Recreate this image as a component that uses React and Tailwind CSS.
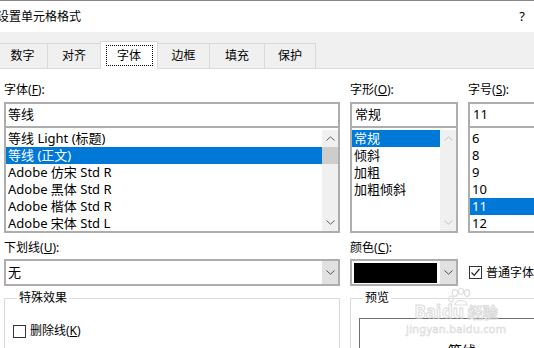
import React from "react";

const FONT = "font-['Noto_Sans','Noto_Sans_CJK_SC',sans-serif]";

function Chevron({ up = false, color = "#606060" }) {
  return (
    <svg width="9" height="5" viewBox="0 0 9 5">
      <path
        d={up ? "M0.5 4.5 L4.5 0.8 L8.5 4.5" : "M0.5 0.5 L4.5 4.2 L8.5 0.5"}
        fill="none"
        stroke={color}
        strokeWidth="1"
      />
    </svg>
  );
}

function Scrollbar({ thumb = false, disabled = false }) {
  const c = disabled ? "#c4c4c4" : "#606060";
  return (
    <div className="flex w-[16px] flex-col bg-[#f0f0f0]">
      <div className="flex h-[17px] items-center justify-center">
        <Chevron up color={c} />
      </div>
      {thumb && <div className="h-[17px] bg-[#cdcdcd]" />}
      <div className="flex-1" />
      <div className="flex h-[17px] items-center justify-center">
        <Chevron color={c} />
      </div>
    </div>
  );
}

function Item({ children, selected }) {
  return (
    <div
      className={`h-[17px] whitespace-nowrap pl-[2px] leading-[17px] ${
        selected ? "bg-[#0078d7] text-white" : ""
      }`}
    >
      {children}
    </div>
  );
}

function Label({ text, hot, rest = "):" }) {
  return (
    <div className="h-[18px] whitespace-nowrap text-[12px] leading-[18px]">
      {text}(<u>{hot}</u>
      {rest}
    </div>
  );
}

function Check({ checked, children }) {
  return (
    <div className="flex items-center gap-[4px] whitespace-nowrap text-[12px]">
      <div className="flex h-[13px] w-[13px] shrink-0 items-center justify-center border border-[#333] bg-white">
        {checked && (
          <svg width="11" height="11" viewBox="0 0 11 11">
            <path d="M1.5 5.5 L4.2 8.3 L9.5 2" fill="none" stroke="#222" strokeWidth="1.2" />
          </svg>
        )}
      </div>
      <span>{children}</span>
    </div>
  );
}

const tabs = [
  { t: "数字", w: "w-[51px]" },
  { t: "对齐", w: "w-[54px]" },
  { t: "字体", w: "w-[58px]", sel: true },
  { t: "边框", w: "w-[53px]" },
  { t: "填充", w: "w-[56px]" },
  { t: "保护", w: "w-[52px]" },
];

export default function App() {
  return (
    <div className={`relative h-[348px] w-[534px] overflow-hidden bg-white text-black ${FONT}`}>
      <div className="h-px bg-[#8a8a8a]" />
      <div className="flex h-[31px] items-center justify-between pr-[9px]">
        <span className="-ml-[3px] text-[12px]">设置单元格格式</span>
        <span className="text-[13px]">?</span>
      </div>

      {/* tab strip */}
      <div className="flex h-[37px] items-end border-b border-[#d9d9d9] bg-[#f0f0f0] pl-0">
        <div className="-ml-[3px] flex items-end">
          {tabs.map((tab, i) =>
            tab.sel ? (
              <div
                key={tab.t}
                className={`relative z-10 -mb-px -ml-px flex h-[28px] ${tab.w} items-center justify-center border border-b-0 border-[#d9d9d9] bg-white`}
              >
                <div className="flex h-[21px] w-[47px] items-center justify-center border border-dotted border-black text-[12px]">
                  {tab.t}
                </div>
              </div>
            ) : (
              <div
                key={tab.t}
                className={`flex h-[25px] ${tab.w} ${i > 0 ? "-ml-px" : ""} items-center justify-center border border-b-0 border-[#d9d9d9] text-[12px]`}
              >
                {tab.t}
              </div>
            )
          )}
        </div>
      </div>

      <div className="px-[4px]">
        {/* font / style / size */}
        <div className="flex gap-[10px] pt-[12px]">
          <div className="flex w-[336px] shrink-0 flex-col">
            <Label text="字体" hot="F" />
            <div className="mt-[3px] flex h-[26px] items-center border-2 border-[#adadad] pl-[2px] text-[13px]">
              等线
            </div>
            <div className="flex h-[105px] border-2 border-t-0 border-[#adadad] pt-[2px] text-[13px]">
              <div className="flex-1 overflow-hidden">
                <Item>等线 Light (标题)</Item>
                <Item selected>等线 (正文)</Item>
                <Item>Adobe 仿宋 Std R</Item>
                <Item>Adobe 黑体 Std R</Item>
                <Item>Adobe 楷体 Std R</Item>
                <Item>Adobe 宋体 Std L</Item>
              </div>
              <Scrollbar thumb />
            </div>
          </div>

          <div className="flex w-[108px] shrink-0 flex-col">
            <Label text="字形" hot="O" />
            <div className="mt-[3px] flex h-[26px] items-center border-2 border-[#adadad] pl-[3px] text-[13px]">
              常规
            </div>
            <div className="flex h-[105px] border-2 border-t-0 border-[#adadad] pt-[2px] text-[13px]">
              <div className="flex-1 overflow-hidden">
                <Item selected>常规</Item>
                <Item>倾斜</Item>
                <Item>加粗</Item>
                <Item>加粗倾斜</Item>
              </div>
              <Scrollbar disabled />
            </div>
          </div>

          <div className="flex w-[110px] shrink-0 flex-col">
            <Label text="字号" hot="S" />
            <div className="mt-[3px] flex h-[26px] items-center border-2 border-[#adadad] pl-[3px] text-[13px]">
              11
            </div>
            <div className="flex h-[105px] border-2 border-t-0 border-[#adadad] pt-[2px] text-[13px]">
              <div className="flex-1 overflow-hidden">
                <Item>6</Item>
                <Item>8</Item>
                <Item>9</Item>
                <Item>10</Item>
                <Item selected>11</Item>
                <Item>12</Item>
              </div>
            </div>
          </div>
        </div>

        {/* underline / colour */}
        <div className="flex gap-[10px] pt-[6px]">
          <div className="flex w-[336px] shrink-0 flex-col">
            <Label text="下划线" hot="U" />
            <div className="mt-[2px] flex h-[27px] border-2 border-[#adadad]">
              <div className="flex flex-1 items-center pl-[2px] text-[13px]">无</div>
              <div className="flex w-[16px] items-center justify-center bg-[#e1e1e1]">
                <Chevron color="#505050" />
              </div>
            </div>
          </div>

          <div className="flex w-[108px] shrink-0 flex-col">
            <Label text="颜色" hot="C" />
            <div className="mt-[2px] flex h-[27px] border-2 border-[#adadad]">
              <div className="flex flex-1 items-center pl-[2px]">
                <div className="h-[20px] w-[83px] bg-black" />
              </div>
              <div className="flex w-[16px] items-center justify-center bg-[#e1e1e1]">
                <Chevron color="#505050" />
              </div>
            </div>
          </div>

          <div className="flex w-[110px] shrink-0 flex-col">
            <div className="h-[18px]" />
            <div className="mt-[2px] flex h-[27px] items-center pl-[1px]">
              <Check checked>普通字体(N)</Check>
            </div>
          </div>
        </div>

        {/* effects / preview */}
        <div className="mt-[4px] flex gap-[10px]">
          <fieldset className="w-[336px] shrink-0 border border-[#dcdcdc] pl-[8px]">
            <legend className="ml-[4px] px-[2px] text-[12px] leading-[16px]">特殊效果</legend>
            <div className="mt-[16px] flex flex-col gap-[10px]">
              <Check>
                删除线(<u>K</u>)
              </Check>
              <Check>
                上标(<u>E</u>)
              </Check>
              <Check>
                下标(<u>B</u>)
              </Check>
            </div>
          </fieldset>

          <fieldset className="w-[300px] shrink-0 border border-[#dcdcdc] pl-[8px]">
            <legend className="ml-[4px] px-[2px] text-[12px] leading-[16px]">预览</legend>
            <div className="mt-[12px] h-[60px] w-[280px] border border-[#6e6e6e] pl-[88px] pt-[23px] text-[14px] leading-[18px]">
              等线
            </div>
          </fieldset>
        </div>
      </div>

      {/* watermark */}
      <div className="pointer-events-none absolute left-[406px] top-[288px] flex flex-col items-center text-transparent">
        <svg width="26" height="19" viewBox="0 0 26 19" className="ml-[10px]">
          <g fill="none" stroke="#dedede" strokeWidth="1.2">
            <ellipse cx="7" cy="5" rx="2.6" ry="3.4" />
            <ellipse cx="13" cy="3.5" rx="2.6" ry="3" />
            <ellipse cx="19" cy="5" rx="2.6" ry="3.4" />
            <ellipse cx="3" cy="11" rx="2.3" ry="3" />
            <path d="M7 17 C7 11 19 11 19 17 Z" />
          </g>
        </svg>
        <div className="-mt-[4px] flex items-baseline text-[17px] font-bold leading-[18px] [-webkit-text-stroke:1px_#dadada]">
          <span>Bai</span>
          <span className="ml-[1px]">du</span>
          <span className="ml-[4px] text-[15px]">经验</span>
        </div>
        <div className="mt-[2px] text-[11px] leading-[12px] tracking-[0.3px] [-webkit-text-stroke:0.6px_#dadada]">
          jingyan.baidu.com
        </div>
      </div>
    </div>
  );
}
